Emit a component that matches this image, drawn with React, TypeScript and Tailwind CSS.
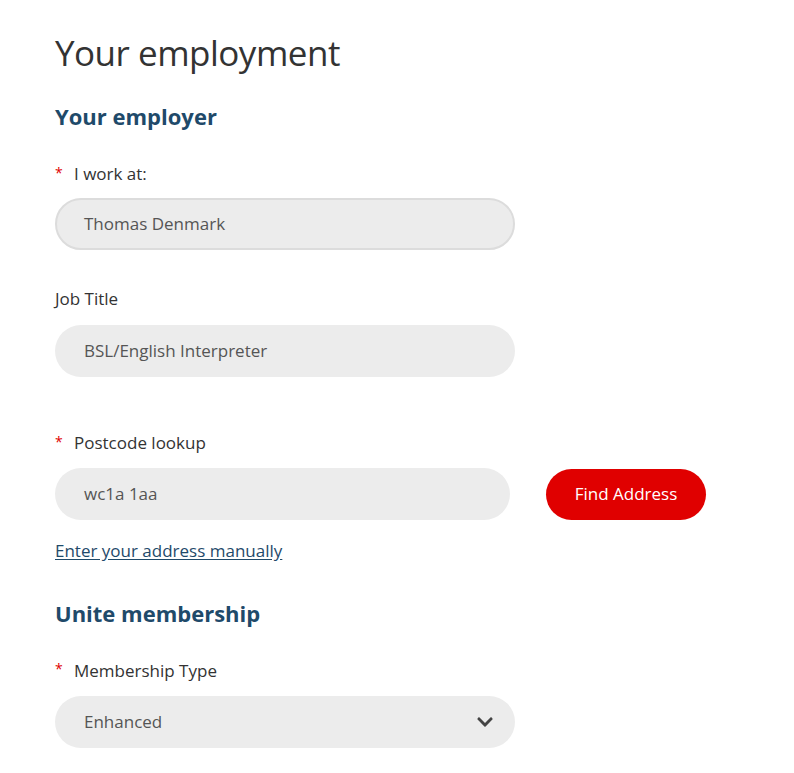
import React from 'react';
import { FaChevronDown } from 'react-icons/fa';

const font = { fontFamily: '"Open Sans", "Liberation Sans", sans-serif' };

const Label: React.FC<{ text: string; required?: boolean }> = ({ text, required }) => (
  <div className="flex items-center h-6 text-[17px] text-[#333]">
    {required && <span className="text-[#e00000] text-[14px] w-[19px] -mt-1">*</span>}
    <span>{text}</span>
  </div>
);

const App: React.FC = () => {
  return (
    <div className="min-h-screen bg-white pl-[55px] pt-[27px]" style={font}>
      <h1 className="text-[35px] leading-[52px] text-[#333] tracking-[-0.5px]">Your employment</h1>

      {/* Employer */}
      <h2 className="mt-[21px] text-[22px] leading-8 font-bold text-[#1f4a6a]">Your employer</h2>

      <div className="mt-[30px]">
        <Label text="I work at:" required />
        <div className="mt-[12px] w-[460px] h-[52px] rounded-full bg-[#ececec] border-2 border-[#dcdcdc] flex items-center pl-[27px] text-[17px] font-medium text-[#555]">
          Thomas Denmark
        </div>
      </div>

      <div className="mt-[37px]">
        <Label text="Job Title" />
        <div className="mt-[14px] w-[460px] h-[52px] rounded-full bg-[#ececec] flex items-center pl-[29px] text-[17px] font-medium text-[#555]">
          BSL/English Interpreter
        </div>
      </div>

      <div className="mt-[54px]">
        <Label text="Postcode lookup" required />
        <div className="mt-[13px] flex items-center gap-[36px]">
          <div className="w-[455px] h-[52px] rounded-full bg-[#ececec] flex items-center pl-[29px] text-[17px] font-medium text-[#555]">
            wc1a 1aa
          </div>
          <button className="w-[160px] h-[51px] rounded-full bg-[#e00000] text-white text-[17px] font-medium">
            Find Address
          </button>
        </div>
        <a href="#" className="inline-block mt-[18px] text-[17px] text-[#1f4a6a] underline underline-offset-2">
          Enter your address manually
        </a>
      </div>

      {/* Membership */}
      <h2 className="mt-[33px] text-[22px] leading-8 font-bold text-[#1f4a6a]">Unite membership</h2>

      <div className="mt-[30px]">
        <Label text="Membership Type" required />
        <div className="mt-[13px] w-[460px] h-[52px] rounded-full bg-[#ececec] flex items-center justify-between pl-[29px] pr-[21px] text-[17px] font-medium text-[#555]">
          <span>Enhanced</span>
          <FaChevronDown className="text-[#444] w-[18px] h-[18px]" />
        </div>
      </div>
    </div>
  );
};

export default App;
